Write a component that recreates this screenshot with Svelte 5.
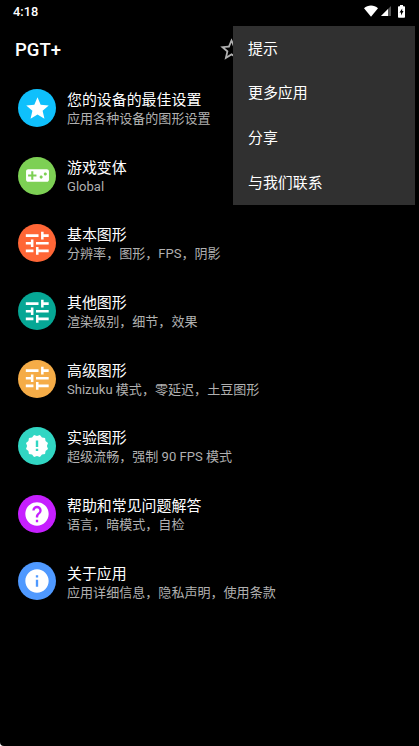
<script lang="ts">
  interface Item {
    title: string;
    summary: string;
    color: string;
    icon: string;
  }

  // scalloped seal with 12 teeth around the centre of a 24x24 box
  function sealPath(teeth: number, outer: number, inner: number): string {
    const points: string[] = [];
    for (let i = 0; i < teeth * 2; i++) {
      const r = i % 2 === 0 ? outer : inner;
      const a = ((i + 1) * Math.PI) / teeth;
      points.push(`${(12 + r * Math.sin(a)).toFixed(2)} ${(12 - r * Math.cos(a)).toFixed(2)}`);
    }
    return `M${points.join('L')}z`;
  }

  const icons: Record<string, string> = {
    star: 'M12 17.27L18.18 21l-1.64-7.03L22 9.24l-7.19-.61L12 2 9.19 8.63 2 9.24l5.46 4.73L5.82 21z',
    gamepad:
      'M21 6H3c-1.1 0-2 .9-2 2v8c0 1.1.9 2 2 2h18c1.1 0 2-.9 2-2V8c0-1.1-.9-2-2-2zm-10 7H8v3H6v-3H3v-2h3V8h2v3h3v2zm4.5 2c-.83 0-1.5-.67-1.5-1.5s.67-1.5 1.5-1.5 1.5.67 1.5 1.5-.67 1.5-1.5 1.5zm4-3c-.83 0-1.5-.67-1.5-1.5S18.67 9 19.5 9s1.5.67 1.5 1.5-.67 1.5-1.5 1.5z',
    tune: 'M3 17v2h6v-2H3zM3 5v2h10V5H3zm10 16v-2h8v-2h-8v-2h-2v6h2zM7 9v2H3v2h4v2h2V9H7zm14 4v-2H11v2h10zm-6-4h2V7h4V5h-4V3h-2v6z',
    release: sealPath(12, 11.4, 9.9) + 'M13.2 17h-2.4v-2.2h2.4zM13.2 13.1h-2.4V6.6h2.4z',
    help: 'M12 2C6.48 2 2 6.48 2 12s4.48 10 10 10 10-4.48 10-10S17.52 2 12 2zm1 17h-2v-2h2v2zm2.07-7.75l-.9.92C13.45 12.9 13 13.5 13 15h-2v-.5c0-1.1.45-2.1 1.17-2.83l1.24-1.26c.37-.36.59-.86.59-1.41 0-1.1-.9-2-2-2s-2 .9-2 2H8c0-2.21 1.79-4 4-4s4 1.79 4 4c0 .88-.36 1.68-.93 2.25z',
    info: 'M12 2C6.48 2 2 6.48 2 12s4.48 10 10 10 10-4.48 10-10S17.52 2 12 2zm1 15h-2v-6h2v6zm0-8h-2V7h2v2z',
  };

  const iconSize: Record<string, number> = {
    star: 27,
    gamepad: 25,
    tune: 30.5,
    release: 24,
    help: 28,
    info: 28,
  };

  const items: Item[] = [
    { title: '您的设备的最佳设置', summary: '应用各种设备的图形设置', color: '#0fc0fc', icon: 'star' },
    { title: '游戏变体', summary: 'Global', color: '#7dd054', icon: 'gamepad' },
    { title: '基本图形', summary: '分辨率，图形，FPS，阴影', color: '#ff6636', icon: 'tune' },
    { title: '其他图形', summary: '渲染级别，细节，效果', color: '#06a795', icon: 'tune' },
    { title: '高级图形', summary: 'Shizuku 模式，零延迟，土豆图形', color: '#f5ac47', icon: 'tune' },
    { title: '实验图形', summary: '超级流畅，强制 90 FPS 模式', color: '#31d6c3', icon: 'release' },
    { title: '帮助和常见问题解答', summary: '语言，暗模式，自检', color: '#c61fff', icon: 'help' },
    { title: '关于应用', summary: '应用详细信息，隐私声明，使用条款', color: '#4f99ff', icon: 'info' },
  ];

  const menu = ['提示', '更多应用', '分享', '与我们联系'];
</script>

<div class="screen">
  <div class="status-bar">
    <span class="clock">4:18</span>
    <div class="status-icons">
      <svg width="14" height="12" viewBox="0 0 14 12">
        <path d="M7 11.7L0 3.2C2 1.3 4.4.5 7 .5s5 .8 7 2.700z" fill="#fff" />
      </svg>
      <svg width="10" height="10" viewBox="0 0 10 10">
        <path d="M10 0v10H0z" fill="#555" />
        <path d="M7 3v7H0z" fill="#fff" />
      </svg>
      <svg class="battery" width="7" height="13" viewBox="0 0 7 13">
        <path
          d="M2 0h3v1.200h1.200q.8 0 .8.800v10q0 .8-.8.800H.8Q0 12.800 0 12V2q0-.8.8-.8H2z"
          fill="#fff"
        />
        <path d="M4.200 3.500L1.500 7.400h1.500v3l2.500-4.300H4.200z" fill="#000" />
      </svg>
    </div>
  </div>

  <header class="toolbar">
    <h1>PGT+</h1>
    <svg class="favorite" width="27" height="27" viewBox="0 0 24 24">
      <path
        d="M22 9.240l-7.190-.620L12 2 9.190 8.630 2 9.240l5.460 4.730L5.820 21 12 17.270 18.180 21l-1.630-7.030L22 9.240zM12 15.400l-3.760 2.270 1-4.280-3.320-2.880 4.380-.380L12 6.100l1.710 4.040 4.380.380-3.320 2.880 1 4.280L12 15.400z"
        fill="#b0b0b0"
      />
    </svg>
  </header>

  <ul class="list">
    {#each items as item (item.title)}
      <li class="row">
        <span class="badge" style="background: {item.color}">
          <svg width={iconSize[item.icon]} height={iconSize[item.icon]} viewBox="0 0 24 24">
            <path d={icons[item.icon]} fill="#fff" fill-rule="evenodd" />
          </svg>
        </span>
        <div class="text">
          <div class="title">{item.title}</div>
          <div class="summary">{item.summary}</div>
        </div>
      </li>
    {/each}
  </ul>

  <div class="menu">
    {#each menu as entry (entry)}
      <div class="menu-item">{entry}</div>
    {/each}
  </div>
</div>

<style>
  :global(body) {
    background: #fff;
  }
  .screen {
    position: relative;
    width: 419px;
    height: 746px;
    overflow: hidden;
    background: #000;
    border-bottom-left-radius: 4px;
    color: #fff;
    font-family: Roboto, 'Noto Sans CJK SC', sans-serif;
  }
  .status-bar {
    display: flex;
    align-items: center;
    justify-content: space-between;
    box-sizing: border-box;
    height: 24px;
    padding: 0 14px 0 13px;
  }
  .clock {
    font-size: 12.8px;
    font-weight: 500;
    line-height: 24px;
  }
  .status-icons {
    display: flex;
    align-items: center;
    gap: 3px;
    margin-top: -2px;
  }
  .battery {
    margin-left: 4px;
  }
  .toolbar {
    display: flex;
    align-items: center;
    box-sizing: border-box;
    height: 50.3px;
    padding: 1px 0 0 15px;
  }
  h1 {
    width: 203px;
    margin: 0;
    font-size: 18.5px;
    font-weight: 500;
    line-height: 24px;
  }
  .favorite {
    margin-top: -1px;
  }
  .list {
    margin: 0;
    padding: 0;
    list-style: none;
  }
  .row {
    display: flex;
    align-items: center;
    height: 67.64px;
    padding-left: 18px;
    gap: 11px;
  }
  .badge {
    display: flex;
    align-items: center;
    justify-content: center;
    width: 38px;
    height: 38px;
    border-radius: 50%;
  }
  .text {
    padding-top: 1.2px;
  }
  .title {
    font-size: 14.93px;
    line-height: 20px;
    white-space: nowrap;
  }
  .summary {
    font-size: 13.06px;
    line-height: 17px;
    color: #b0b0b0;
    white-space: nowrap;
  }
  .menu {
    position: absolute;
    top: 26px;
    left: 233px;
    width: 182px;
    background: #303030;
  }
  .menu-item {
    box-sizing: border-box;
    height: 44.8px;
    padding: 0.6px 0 0 15px;
    font-size: 14.93px;
    line-height: 44.8px;
  }
</style>
